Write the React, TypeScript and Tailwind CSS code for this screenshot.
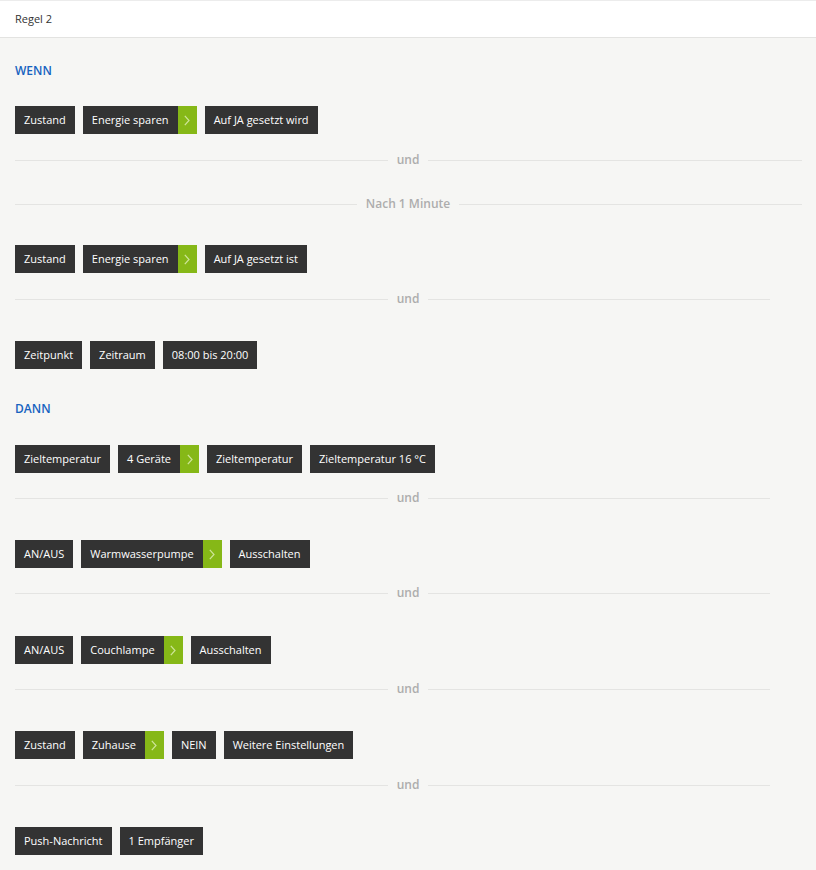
import React from 'react';

type Chip = { label: string; arrow?: boolean };

type Item =
    | { kind: 'label'; text: string; mt: string }
    | { kind: 'row'; chips: Chip[]; mt: string }
    | { kind: 'divider'; text: string; mt: string; full?: boolean };

const Chevron = () => (
    <svg width="6" height="11" viewBox="0 0 6 11" fill="none">
        <path d="M0.8 0.8 L5 5.5 L0.8 10.2" stroke="#cfe59a" strokeWidth="1.2" />
    </svg>
);

const ChipBox: React.FC<{ chip: Chip }> = ({ chip }) => (
    <div className="flex h-7 items-stretch">
        <div className="flex items-center bg-[#333333] px-[9px] text-[11px] text-white">{chip.label}</div>
        {chip.arrow && (
            <div className="flex w-[19px] items-center justify-center bg-[#86b817]">
                <Chevron />
            </div>
        )}
    </div>
);

const Divider: React.FC<{ text: string; full?: boolean; mt: string }> = ({ text, full, mt }) => (
    <div className={`grid h-[18px] grid-cols-[1fr_auto_1fr] items-center ${mt}`}>
        <div className="h-px bg-[#e4e4e2]" />
        <span className="px-[9px] text-[12px] font-semibold text-[#adadad]">{text}</span>
        <div className={`h-px bg-[#e4e4e2] ${full ? 'mr-[-1px]' : 'mr-[31px]'}`} />
    </div>
);

const items: Item[] = [
    { kind: 'label', text: 'WENN', mt: 'mt-[25px]' },
    {
        kind: 'row',
        mt: 'mt-[27px]',
        chips: [{ label: 'Zustand' }, { label: 'Energie sparen', arrow: true }, { label: 'Auf JA gesetzt wird' }],
    },
    { kind: 'divider', text: 'und', mt: 'mt-[17px]', full: true },
    { kind: 'divider', text: 'Nach 1 Minute', mt: 'mt-[26px]', full: true },
    {
        kind: 'row',
        mt: 'mt-[32px]',
        chips: [{ label: 'Zustand' }, { label: 'Energie sparen', arrow: true }, { label: 'Auf JA gesetzt ist' }],
    },
    { kind: 'divider', text: 'und', mt: 'mt-[17px]' },
    {
        kind: 'row',
        mt: 'mt-[33px]',
        chips: [{ label: 'Zeitpunkt' }, { label: 'Zeitraum' }, { label: '08:00 bis 20:00' }],
    },
    { kind: 'label', text: 'DANN', mt: 'mt-[32px]' },
    {
        kind: 'row',
        mt: 'mt-[28px]',
        chips: [
            { label: 'Zieltemperatur' },
            { label: '4 Geräte', arrow: true },
            { label: 'Zieltemperatur' },
            { label: 'Zieltemperatur 16 °C' },
        ],
    },
    { kind: 'divider', text: 'und', mt: 'mt-[16px]' },
    {
        kind: 'row',
        mt: 'mt-[33px]',
        chips: [{ label: 'AN/AUS' }, { label: 'Warmwasserpumpe', arrow: true }, { label: 'Ausschalten' }],
    },
    { kind: 'divider', text: 'und', mt: 'mt-[16px]' },
    {
        kind: 'row',
        mt: 'mt-[34px]',
        chips: [{ label: 'AN/AUS' }, { label: 'Couchlampe', arrow: true }, { label: 'Ausschalten' }],
    },
    { kind: 'divider', text: 'und', mt: 'mt-[16px]' },
    {
        kind: 'row',
        mt: 'mt-[33px]',
        chips: [
            { label: 'Zustand' },
            { label: 'Zuhause', arrow: true },
            { label: 'NEIN' },
            { label: 'Weitere Einstellungen' },
        ],
    },
    { kind: 'divider', text: 'und', mt: 'mt-[17px]' },
    {
        kind: 'row',
        mt: 'mt-[33px]',
        chips: [{ label: 'Push-Nachricht' }, { label: '1 Empfänger' }],
    },
];

export default function App() {
    return (
        <div className="min-h-[870px] bg-[#f6f6f4] font-['Open_Sans',sans-serif] text-[12px] leading-4">
            <div className="flex h-[38px] items-center border-t border-b border-t-[#ececec] border-b-[#e3e3e1] bg-white px-[15px] text-[11px] text-[#333333]">
                Regel 2
            </div>
            <div className="px-[15px] pb-8">
                {items.map((item, i) => {
                    if (item.kind === 'label') {
                        return (
                            <div key={i} className={`h-4 font-semibold text-[#1763c0] ${item.mt}`}>
                                {item.text}
                            </div>
                        );
                    }
                    if (item.kind === 'divider') {
                        return <Divider key={i} text={item.text} full={item.full} mt={item.mt} />;
                    }
                    return (
                        <div key={i} className={`flex gap-2 ${item.mt}`}>
                            {item.chips.map((c, j) => (
                                <ChipBox key={j} chip={c} />
                            ))}
                        </div>
                    );
                })}
            </div>
        </div>
    );
}
